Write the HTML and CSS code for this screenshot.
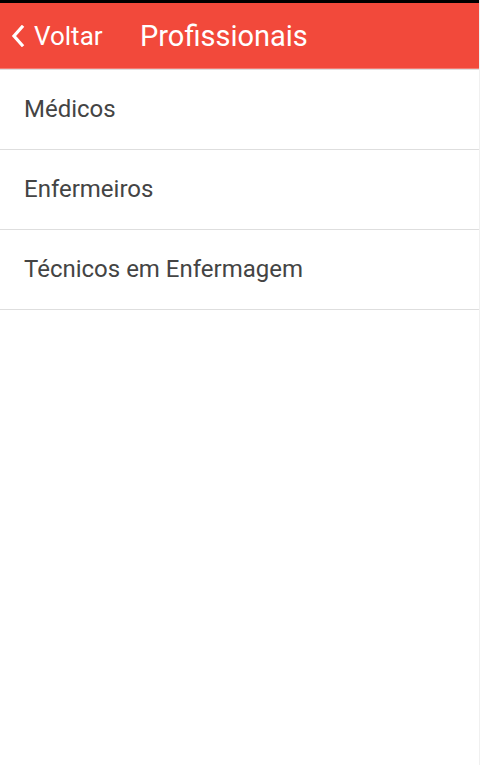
FILE: index.html
```html
<!DOCTYPE html>
<html lang="pt">
<head>
    <meta charset="UTF-8">
    <meta name="viewport" content="width=device-width, initial-scale=1.0">
    <title>Profissionais</title>
    <link rel="stylesheet" href="styles.css">
</head>
<body>
    <div class="status-bar"></div>
    <div class="header">
        <a class="back-button" href="#">
            <svg class="back-icon" width="14" height="22" viewBox="0 0 14 22">
                <path d="M11 2 L3 11 L11 20" fill="none" stroke="#ffffff" stroke-width="3.2" stroke-linecap="square"/>
            </svg>
            Voltar
        </a>
        <div class="title">Profissionais</div>
    </div>
    <ul class="list">
        <li class="list-item">Médicos</li>
        <li class="list-item">Enfermeiros</li>
        <li class="list-item">Técnicos em Enfermagem</li>
    </ul>
</body>
</html>
```

FILE: styles.css
```css
* {
    margin: 0;
    padding: 0;
    box-sizing: border-box;
}

body {
    font-family: Roboto, 'Liberation Sans', sans-serif;
    background: #ffffff;
    color: #444444;
    width: 480px;
    min-height: 765px;
    border-right: 1px solid #f0f0f0;
}

.status-bar {
    height: 3px;
    background: #000000;
}

.header {
    height: 66px;
    background: #f2493b;
    display: flex;
    align-items: center;
    border-bottom: 1px solid #f47b71;
    box-shadow: 0 1px 0 #dddddd;
}

.back-button {
    display: flex;
    align-items: center;
    color: #ffffff;
    text-decoration: none;
    font-size: 26px;
    padding-left: 11px;
    width: 140px;
    padding-top: 1px;
}

.back-icon {
    margin-right: 9px;
}

.title {
    color: #ffffff;
    font-size: 29px;
}

.list {
    list-style: none;
    margin-top: 1px;
}

.list-item {
    height: 80px;
    display: flex;
    align-items: center;
    padding-left: 24px;
    padding-bottom: 2px;
    font-size: 24px;
    color: #444444;
    border-bottom: 1px solid #dedede;
}
```
